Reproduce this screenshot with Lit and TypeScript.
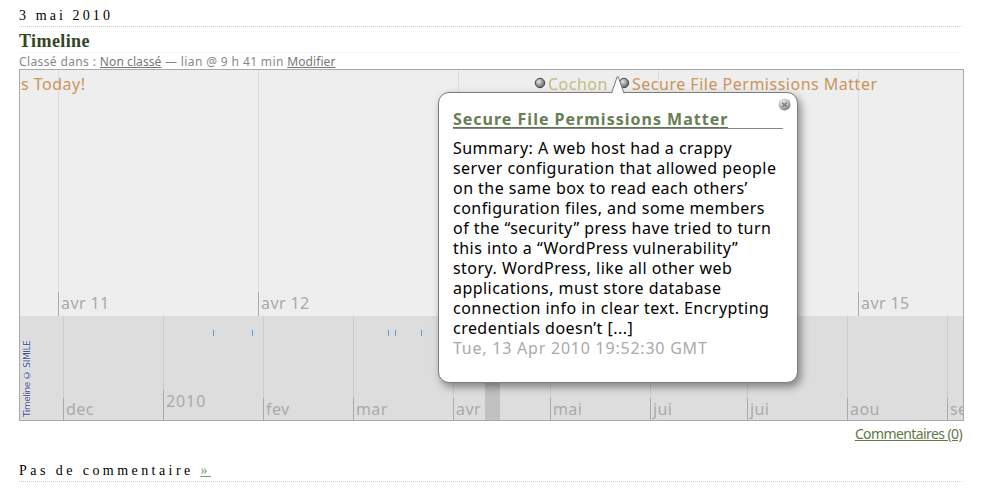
import { LitElement, html, css, svg } from "lit";
import { customElement } from "lit/decorators.js";

const days = [
  { x: 38, label: "avr 11" },
  { x: 238, label: "avr 12" },
  { x: 438, label: "" },
  { x: 638, label: "" },
  { x: 838, label: "avr 15" },
];

const months = [
  { x: 43, label: "dec" },
  { x: 143, label: "2010", year: true },
  { x: 243, label: "fev" },
  { x: 333, label: "mar" },
  { x: 433, label: "avr" },
  { x: 530, label: "mai" },
  { x: 630, label: "jui" },
  { x: 727, label: "jui" },
  { x: 827, label: "aou" },
  { x: 927, label: "sep" },
];

const overviewEvents = [193, 232, 368, 375, 401];

const summary = [
  "Summary: A web host had a crappy",
  "server configuration that allowed people",
  "on the same box to read each others’",
  "configuration files, and some members",
  "of the “security” press have tried to turn",
  "this into a “WordPress vulnerability”",
  "story. WordPress, like all other web",
  "applications, must store database",
  "connection info in clear text. Encrypting",
  "credentials doesn’t [...]",
];

@customElement("event-bubble")
export class EventBubble extends LitElement {
  static styles = css`
    :host {
      display: block;
      box-sizing: border-box;
      width: 360px;
      height: 291px;
      padding: 15px 14px 0;
      border: 1px solid #7c7c7c;
      border-radius: 11px;
      background: #fff;
      box-shadow: 3px 4px 9px rgba(0, 0, 0, 0.42);
      color: #000;
    }
    .arrow {
      position: absolute;
      left: 171px;
      top: -17px;
      width: 16px;
      height: 18px;
    }
    .close {
      position: absolute;
      right: 6px;
      top: 5px;
      width: 13px;
      height: 13px;
    }
    .title {
      height: 20px;
      line-height: 22px;
      border-bottom: 1px solid #888;
      font-weight: 700;
      font-size: 16px;
      letter-spacing: 1px;
      white-space: nowrap;
    }
    .title a {
      display: inline-block;
      height: 19px;
      border-bottom: 1px solid #607848;
      color: #667e54;
      text-decoration: none;
    }
    .body {
      margin-top: 9px;
      font-size: 16px;
      line-height: 20px;
      letter-spacing: 0.46px;
      white-space: nowrap;
    }
    .line {
      display: block;
    }
    .time {
      color: #aaa;
      letter-spacing: 0.77px;
    }
  `;
  render() {
    return html`
      <svg class="arrow" viewBox="0 0 16 18">
        <path d="M1 18 L7.2 1 L8.2 1 L14.5 18Z" fill="#fff" />
        <path d="M1.5 17.3 L7.2 .8 L8.2 .8 L14 17.3" fill="none" stroke="#777" stroke-width="1" />
      </svg>
      <svg class="close" viewBox="0 0 13 13">
        <defs>
          <radialGradient id="c" cx=".35" cy=".25" r=".8">
            <stop offset="0" stop-color="#e8e8e8" />
            <stop offset=".6" stop-color="#b8b8b8" />
            <stop offset="1" stop-color="#777" />
          </radialGradient>
        </defs>
        <circle cx="6.5" cy="6.5" r="6" fill="url(#c)" />
        <path d="M4.2 4.5l4.6 4.4M8.8 4.5L4.2 8.9" stroke="#808080" stroke-width="1.5" />
      </svg>
      <div class="title"><a>Secure File Permissions Matter</a></div>
      <div class="body">
        ${summary.map((l) => html`<span class="line">${l}</span>`)}
        <span class="line time">Tue, 13 Apr 2010 19:52:30 GMT</span>
      </div>
    `;
  }
}

@customElement("app-root")
export class AppRoot extends LitElement {
  static styles = css`
    :host {
      display: flex;
      flex-direction: column;
      box-sizing: border-box;
      height: 503px;
      padding: 5px 34px 0 19px;
      background: #fff;
      overflow: hidden;
      font-family: "Noto Sans", "Open Sans", sans-serif;
    }
    .date,
    .replies {
      box-sizing: border-box;
      flex: none;
      width: 943px;
      height: 22px;
      border-bottom: 1px dotted #ccc;
      font: 14px/22px "Liberation Serif", serif;
      letter-spacing: 3.1px;
      color: #000;
    }
    .replies {
      letter-spacing: 3.44px;
    }
    .title {
      box-sizing: border-box;
      flex: none;
      width: 943px;
      height: 26px;
      margin: 0;
      border-bottom: 1px dotted #eee;
      font: bold 18px/28px "Liberation Serif", serif;
      letter-spacing: 0.4px;
      color: #342;
    }
    .meta {
      flex: none;
      height: 16px;
      font-size: 12px;
      line-height: 18px;
      letter-spacing: 0.38px;
      color: #888;
      white-space: nowrap;
    }
    .meta a {
      color: #777;
      letter-spacing: 0.08px;
      text-decoration: underline;
    }
    .timeline {
      position: relative;
      box-sizing: border-box;
      flex: none;
      width: 945px;
      height: 352px;
      border: 1px solid #aaa;
      font-size: 16px;
      color: #aaa;
    }
    .band {
      position: relative;
      overflow: hidden;
      white-space: nowrap;
    }
    .detail {
      height: 246px;
      background: #eee;
    }
    .overview {
      height: 104px;
      background: #ddd;
    }
    .grid {
      position: absolute;
      top: 0;
      bottom: 0;
      width: 1px;
      background: #ddd;
    }
    .overview .grid {
      background: #ccc;
    }
    .mark {
      position: absolute;
      bottom: 0;
      height: 24px;
      padding-left: 2px;
      border-left: 1px solid #aaa;
      line-height: 22px;
      letter-spacing: 0.4px;
    }
    .overview .mark {
      height: 22px;
    }
    .overview .mark.year {
      height: 30px;
      letter-spacing: 0.9px;
    }
    .tick {
      position: absolute;
      top: 14px;
      width: 1px;
      height: 6px;
      background: #58a0dc;
    }
    .highlight {
      position: absolute;
      left: 465px;
      top: 0;
      width: 15px;
      height: 104px;
      background: #c1c1c1;
    }
    .event {
      position: absolute;
      top: 3px;
      display: flex;
      line-height: 22px;
      letter-spacing: 0.5px;
      color: #cc9459;
    }
    .event svg {
      width: 12px;
      height: 12px;
      margin: 4px 2px 0 0;
    }
    .today {
      left: 1px;
    }
    .cochon {
      left: 514px;
      color: #c0c080;
    }
    .secure {
      left: 598px;
    }
    .credit {
      position: absolute;
      left: 1px;
      bottom: 3px;
      width: 12px;
      height: 76px;
      writing-mode: vertical-rl;
      transform: rotate(180deg);
      font: 9px/12px "DejaVu Sans", sans-serif;
      letter-spacing: -0.42px;
      white-space: nowrap;
      color: #35478c;
      text-shadow: 0 0 1px #fff, 0 0 2px #fff;
    }
    event-bubble {
      position: absolute;
      left: 418px;
      top: 22px;
    }
    .feedback {
      flex: none;
      width: 943px;
      height: 39px;
      font-size: 14px;
      line-height: 26px;
      text-align: right;
      letter-spacing: -0.6px;
    }
    .feedback a {
      color: #607848;
      text-decoration: underline;
    }
    .replies a {
      color: #7a9a6a;
      text-decoration: underline;
    }
  `;

  private dot() {
    return html`<svg viewBox="0 0 12 12">
      ${svg`<defs><radialGradient id="d" cx=".38" cy=".35" r=".65">
        <stop offset="0" stop-color="#eee"/><stop offset=".45" stop-color="#aaa"/><stop offset="1" stop-color="#666"/>
      </radialGradient></defs>
      <circle cx="6" cy="6" r="4.7" fill="url(#d)" stroke="#444" stroke-width="1"/>`}
    </svg>`;
  }

  render() {
    return html`
      <div class="date">3 mai 2010</div>
      <h3 class="title">Timeline</h3>
      <div class="meta">Classé dans : <a>Non classé</a> — lian @ 9 h 41 min <a>Modifier</a></div>
      <div class="timeline">
        <div class="band detail">
          ${days.map(
            (d) => html`<div class="grid" style="left:${d.x}px"></div>
              <div class="mark" style="left:${d.x}px">${d.label}</div>`
          )}
          <div class="event today">s Today!</div>
          <div class="event cochon">${this.dot()}Cochon</div>
          <div class="event secure">${this.dot()}Secure File Permissions Matter</div>
        </div>
        <div class="band overview">
          <div class="highlight"></div>
          ${months.map(
            (m) => html`<div class="grid" style="left:${m.x}px"></div>
              <div class="mark ${m.year ? "year" : ""}" style="left:${m.x}px">${m.label}</div>`
          )}
          ${overviewEvents.map((x) => html`<div class="tick" style="left:${x}px"></div>`)}
          <div class="credit">Timeline © SIMILE</div>
        </div>
        <event-bubble></event-bubble>
      </div>
      <div class="feedback"><a>Commentaires (0)</a></div>
      <div class="replies">Pas de commentaire <a>»</a></div>
    `;
  }
}
